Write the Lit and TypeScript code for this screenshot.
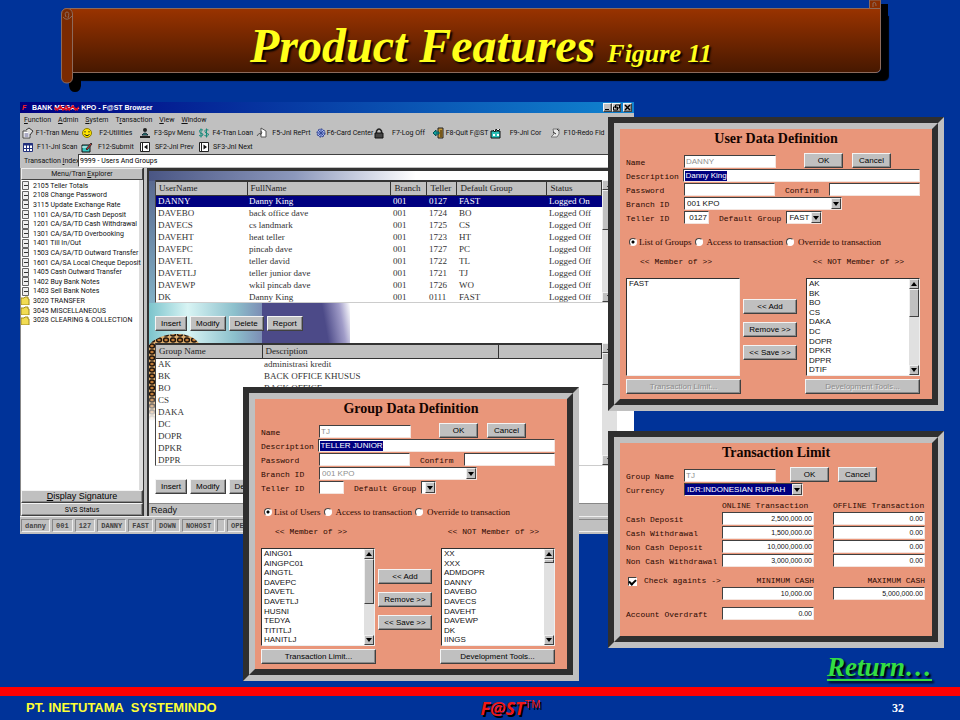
import { LitElement, html, svg, css, nothing } from "lit";
import { customElement, property } from "lit/decorators.js";

const controls = css`
  * { box-sizing: border-box; }
  button {
    font: 8px/11px "Liberation Sans", Arial, sans-serif;
    color: #000;
    background: #c0c0c0;
    border: 1px solid;
    border-color: #f4f4f4 #404040 #404040 #f4f4f4;
    box-shadow: inset -1px -1px 0 #8a8a8a;
    padding: 0;
    height: 15px;
    white-space: nowrap;
  }
  button:disabled { color: #8c8c8c; text-shadow: 1px 1px 0 #eee; }
  .scroll {
    flex: none;
    width: 10px;
    background: #e0e0e0;
    display: flex;
    flex-direction: column;
  }
  .arrow, .thumb {
    background: #c0c0c0;
    border: 1px solid;
    border-color: #f0f0f0 #404040 #404040 #f0f0f0;
  }
  .arrow { height: 10px; display: grid; place-items: center; }
  .arrow.down { margin-top: auto; }
  .arrow svg { width: 6px; height: 4px; display: block; }
`;

const formStyles = css`
  :host { display: block; }
  .frame {
    border: 6px solid;
    border-color: #2f2f2f #c0c0c0 #c0c0c0 #2f2f2f;
  }
  .face {
    border: 6px solid;
    border-color: #c0c0c0 #2f2f2f #2f2f2f #c0c0c0;
    background: #e9967a;
    padding: 0 12px 5px 6px;
    font: 8px/10px "Liberation Mono", "Courier New", monospace;
    color: #2a0800;
    white-space: nowrap;
  }
  h2 {
    margin: 0 -6px 6px 0;
    text-align: center;
    font: bold 14px/19px "Liberation Serif", "Times New Roman", serif;
    color: #140400;
  }
  .row { display: flex; align-items: flex-end; height: 14px; }
  .row > label:first-child { width: 58px; }
  .field {
    display: flex;
    align-items: center;
    height: 13px;
    background: #fff;
    border: 1px solid;
    border-color: #404040 #f4e4de #f4e4de #404040;
    padding: 0 1px;
    overflow: hidden;
  }
  .field input, .field select {
    font: 8px/10px "Liberation Sans", Arial, sans-serif;
    border: 0;
    padding: 0;
    margin: 0;
    background: transparent;
    color: #111;
    width: 100%;
    min-width: 0;
    height: 10px;
    outline: 0;
    appearance: none;
    border-radius: 0;
  }
  .field input:disabled, .field select:disabled { color: #909090; opacity: 1; }
  .field .chosen { background: #000080; color: #fff; width: auto; field-sizing: content; }
  .med { width: 92px; }
  .long { width: 239px; }
  .combo { width: 158px; }
  .tiny { width: 25px; }
  .drop { padding: 0; }
  .drop select { padding-left: 2px; }
  .drop .arrow { flex: none; width: 10px; height: 11px; }
  .ok { width: 39px; margin-left: 28px; }
  .cancel { width: 39px; margin-left: 9px; }
`;

const tri = (up: boolean) => html`<svg viewBox="0 0 6 4" aria-hidden="true">
  ${up ? svg`<path d="M3 0L6 4H0Z" fill="#000"/>` : svg`<path d="M0 0H6L3 4Z" fill="#000"/>`}
</svg>`;

const scrollbar = (thumb: number) => html`<div class="scroll">
  <span class="arrow">${tri(true)}</span>
  <span class="thumb" style="height:${thumb}px"></span>
  <span class="arrow down">${tri(false)}</span>
</div>`;

@customElement("member-dialog")
class MemberDialog extends LitElement {
  @property() heading = "";
  @property() name = "";
  @property() description = "";
  @property() teller = "";
  @property() group = "";
  @property() subject = "";
  @property({ type: Boolean }) editable = false;
  @property({ attribute: false }) members: string[] = [];
  @property({ attribute: false }) others: string[] = [];
  @property({ type: Number }) memberThumb = 0;
  @property({ type: Number }) otherThumb = 4;

  static styles = [controls, formStyles, css`
    .confirm { margin-left: 10px; width: 44px; }
    .group-label { margin: 0 5px 0 10px; }
    .mini { width: 15px; }
    .named { width: 36px; }
    .radios {
      display: flex;
      align-items: center;
      height: 14px;
      margin-top: 11px;
      font: 9px/12px "Liberation Serif", "Times New Roman", serif;
    }
    .radios label { display: flex; align-items: center; margin-left: 3px; }
    .radios label + label { gap: 2px; }
    input[type="radio"] {
      appearance: none;
      width: 8px;
      height: 8px;
      margin: 0 2px 0 0;
      border-radius: 50%;
      border: 1px solid;
      border-color: #444 #fff #fff #444;
      background: #fff;
    }
    input[type="radio"]:checked { background: radial-gradient(#000 0 1px, #fff 2px); }
    .captions {
      display: flex;
      justify-content: space-between;
      padding: 0 16px 0 14px;
      margin: 8px 0 11px;
    }
    .lists { display: flex; height: 98px; }
    .list {
      width: 114px;
      display: flex;
      background: #fff;
      border: 1px solid;
      border-color: #303030 #eee #eee #303030;
    }
    ul {
      flex: 1;
      margin: 0;
      padding: 0 0 0 2px;
      list-style: none;
      display: grid;
      grid-template-rows: repeat(10, 1fr);
      font: 8px/9px "Liberation Sans", Arial, sans-serif;
      color: #111;
    }
    .moves {
      flex: 1;
      display: flex;
      flex-direction: column;
      gap: 8px;
      padding: 21px 9px 0 3px;
    }
    .bottom { display: flex; justify-content: space-between; margin-top: 3px; }
    .bottom button { width: 115px; }
  `];

  render() {
    return html`<section class="frame"><form class="face">
      <h2>${this.heading}</h2>
      <div class="row">
        <label for="name">Name</label>
        <span class="field med"><input id="name" disabled .value=${this.name}></span>
        <button type="button" class="ok">OK</button>
        <button type="button" class="cancel">Cancel</button>
      </div>
      <div class="row">
        <label for="desc">Description</label>
        <span class="field long"><input id="desc" class="chosen" value=${this.description}></span>
      </div>
      <div class="row">
        <label for="pw">Password</label>
        <span class="field med"><input id="pw" type="password"></span>
        <label for="pw2" class="confirm">Confirm</label>
        <span class="field med"><input id="pw2" type="password"></span>
      </div>
      <div class="row">
        <label for="branch">Branch ID</label>
        <span class="field combo drop">
          <select id="branch" ?disabled=${!this.editable}><option>001 KPO</option></select>
          <span class="arrow">${tri(false)}</span>
        </span>
      </div>
      <div class="row">
        <label for="teller">Teller ID</label>
        <span class="field tiny"><input id="teller" style="text-align:right" .value=${this.teller}></span>
        <label for="group" class="group-label">Default Group</label>
        <span class="field drop ${this.group ? "named" : "mini"}">
          <select id="group" ?disabled=${!this.editable}><option>${this.group}</option></select>
          <span class="arrow">${tri(false)}</span>
        </span>
      </div>
      <div class="radios">
        <label><input type="radio" name="view" checked>${this.subject}</label>
        <label><input type="radio" name="view">Access to transaction</label>
        <label><input type="radio" name="view">Override to transaction</label>
      </div>
      <div class="captions"><span>&lt;&lt; Member of &gt;&gt;</span><span>&lt;&lt; NOT Member of &gt;&gt;</span></div>
      <div class="lists">
        <div class="list">
          <ul>${this.members.map((m) => html`<li>${m}</li>`)}</ul>
          ${this.memberThumb ? scrollbar(this.memberThumb) : nothing}
        </div>
        <div class="moves">
          <button type="button">&lt;&lt; Add</button>
          <button type="button">Remove &gt;&gt;</button>
          <button type="button">&lt;&lt; Save &gt;&gt;</button>
        </div>
        <div class="list">
          <ul>${this.others.map((m) => html`<li>${m}</li>`)}</ul>
          ${scrollbar(this.otherThumb)}
        </div>
      </div>
      <div class="bottom">
        <button type="button" ?disabled=${this.editable}>Transaction Limit...</button>
        <button type="button" ?disabled=${this.editable}>Development Tools...</button>
      </div>
    </form></section>`;
  }
}

@customElement("limit-dialog")
class LimitDialog extends LitElement {
  static styles = [controls, formStyles, css`
    .face { padding-bottom: 16px; }
    .ok { margin-left: 14px; }
    .currency { width: 119px; }
    .currency select { background: #000080; color: #fff; height: 11px; }
    .limits {
      display: grid;
      grid-template-columns: 96px 92px 92px;
      justify-content: start;
      align-items: end;
      grid-auto-rows: 14px;
      margin-top: 1px;
    }
    .limits > :nth-child(3n) { margin-left: 19px; margin-right: -19px; }
    .limits input { text-align: right; font-size: 7px; }
    .limits.floor, .limits.over { margin-top: 6px; }
    .limits.floor { margin-top: 5px; }
    .right { text-align: right; }
    .check { display: flex; align-items: center; gap: 7px; padding-left: 2px; }
    .check input {
      appearance: none;
      display: grid;
      place-items: center;
      width: 9px;
      height: 9px;
      margin: 0;
      border: 1px solid;
      border-color: #404040 #fff #fff #404040;
      background: #fff;
    }
    .check input:checked::after {
      content: "";
      width: 5px;
      height: 3px;
      border: solid #000;
      border-width: 0 0 2px 2px;
      rotate: -45deg;
    }
  `];

  render() {
    const rows = [
      ["Cash Deposit", "2,500,000.00"],
      ["Cash Withdrawal", "1,500,000.00"],
      ["Non Cash Deposit", "10,000,000.00"],
      ["Non Cash Withdrawal", "3,000,000.00"],
    ];
    return html`<section class="frame"><form class="face">
      <h2>Transaction Limit</h2>
      <div class="row">
        <label for="gname">Group Name</label>
        <span class="field med"><input id="gname" disabled value="TJ"></span>
        <button type="button" class="ok">OK</button>
        <button type="button" class="cancel">Cancel</button>
      </div>
      <div class="row">
        <label for="cur">Currency</label>
        <span class="field currency drop">
          <select id="cur"><option>IDR:INDONESIAN RUPIAH</option></select>
          <span class="arrow">${tri(false)}</span>
        </span>
      </div>
      <div class="limits">
        <span></span><span>ONLINE Transaction</span><span>OFFLINE Transaction</span>
        ${rows.map(([label, value], i) => html`
          <label for="on${i}">${label}</label>
          <span class="field"><input id="on${i}" value=${value}></span>
          <span class="field"><input aria-label="${label} offline" value="0.00"></span>`)}
      </div>
      <div class="limits floor">
        <label class="check"><input type="checkbox" checked>Check againts -&gt;</label>
        <span class="right">MINIMUM CASH</span><span class="right">MAXIMUM CASH</span>
        <span></span>
        <span class="field"><input aria-label="Minimum cash" value="10,000.00"></span>
        <span class="field"><input aria-label="Maximum cash" value="5,000,000.00"></span>
      </div>
      <div class="limits over">
        <label for="over">Account Overdraft</label>
        <span class="field"><input id="over" value="0.00"></span>
      </div>
    </form></section>`;
  }
}

const icons: Record<string, unknown> = {
  menu: svg`<path d="M1 4h7v7H1z" fill="#fff" stroke="#444"/><path d="M2.500 7h4M2.500 9h4" stroke="#558"/><path d="M4 3l3-2 4 3-3 4" fill="#ddd" stroke="#333"/>`,
  smile: svg`<circle cx="6" cy="6" r="4.500" fill="#ffe600" stroke="#8a7a00"/><path d="M4 4v1.500M8 4v1.500M3.500 7.500q2.500 2.500 5 0" stroke="#222" fill="none"/>`,
  person: svg`<circle cx="6" cy="3" r="2" fill="#222"/><path d="M3 8q3-4 6 0z" fill="#2c9c8c" stroke="#123"/><path d="M1 10h10" stroke="#222" stroke-width="2"/>`,
  money: svg`<path d="M5 3Q1 2 1.500 4.500T5 7Q5 10 1 8.500M3 1.500v9M10.500 3Q6.500 2 7 4.500T10.500 7Q10.500 10 6.500 8.500M8.500 1.500v9" stroke="#178a7a" fill="none"/>`,
  page: svg`<path d="M5 1l5 3v6H5z" fill="#fff" stroke="#555"/><path d="M1 9q1-3 5-3l-1-2M6 6l-2 2" stroke="#555" fill="none"/>`,
  globe: svg`<circle cx="6" cy="6" r="4" fill="#a9b6ec" stroke="#23337a" stroke-dasharray="2 1"/><path d="M6 2v8M2 6h8M3 3l6 6M9 3L3 9" stroke="#344a9a"/>`,
  lock: svg`<path d="M3.500 6V4q2.500-4 5 0v2" stroke="#222" stroke-width="1.500" fill="none"/><path d="M2 6h8v5H2z" fill="#444" stroke="#111"/>`,
  exit: svg`<path d="M6 1h5v10H6z" fill="#c79a3b" stroke="#222"/><path d="M8 3h2v7H8z" fill="#7a5a1a"/><path d="M1 6l3-3v2h3v2H4v2z" fill="#14a0a0" stroke="#055"/>`,
  form: svg`<path d="M1 4h9v7H1z" fill="#2cc0b8" stroke="#111"/><path d="M3 3l2 2 1-3 2 2 2-2" stroke="#111" fill="#fff"/><path d="M3 7h2v2H3zM7 7h2v2H7z" fill="#fff"/>`,
  redo: svg`<path d="M4 2h6v5l-2 3H2l3-3z" fill="#e8e8e8" stroke="#777"/><path d="M4 5l3 2M8 2l2 2" stroke="#333"/>`,
  grid: svg`<path d="M1.500 2.500h9v8h-9z" fill="#fff" stroke="#22307c"/><path d="M1 3.500h10" stroke="#22307c" stroke-width="2"/><path d="M4.500 4v6M7.500 4v6M2 7.500h9" stroke="#22307c"/>`,
  submit: svg`<path d="M1 4h8v7H1z" fill="#38c4be" stroke="#111"/><path d="M1 6h7" stroke="#fff"/><path d="M5 8l5-6 1 1-5 6z" fill="#e33" stroke="#333"/>`,
  prev: svg`<path d="M1.500 1.500h9v9h-9z" fill="#fff" stroke="#222"/><path d="M3.500 2v8" stroke="#222"/><path d="M8.500 3.500v5L5 6z" fill="#111"/>`,
  next: svg`<path d="M1.500 1.500h9v9h-9z" fill="#fff" stroke="#222"/><path d="M3.500 2v8" stroke="#222"/><path d="M5.500 3.500v5L9 6z" fill="#111"/>`,
};

const icon = (name: string) => html`<svg class="icon" viewBox="0 0 12 12" aria-hidden="true">${icons[name]}</svg>`;

@customElement("browser-window")
class BrowserWindow extends LitElement {
  static styles = [controls, css`
    :host {
      display: block;
      background: #c0c0c0;
      font: 7px/10px Roboto, "Liberation Sans", sans-serif;
      color: #111;
      white-space: nowrap;
    }
    .title {
      display: flex;
      align-items: center;
      height: 11px;
      padding: 0 2px;
      background: linear-gradient(90deg, #000080, #1084d0);
      color: #fff;
      font: bold 7px/10px "Liberation Sans", sans-serif;
    }
    .logo { color: #f22; width: 10px; font-style: italic; }
    .struck { position: relative; }
    .struck svg { position: absolute; left: 0; top: 1px; width: 100%; height: 8px; }
    .sys { display: flex; margin-left: auto; }
    .sys button { width: 9px; height: 9px; display: grid; place-items: center; }
    .sys button:last-child { margin-left: 2px; }
    .sys svg { width: 7px; height: 7px; }
    nav { display: flex; gap: 7px; padding: 1px 4px; height: 13px; align-items: center; }
    nav a { color: inherit; text-decoration: none; }
    .tools {
      display: grid;
      grid-template-columns: repeat(10, 1fr);
      grid-auto-rows: 14px;
      padding: 0 27px 0 2px;
    }
    .tools button {
      all: unset;
      display: flex;
      align-items: center;
      color: #111;
      min-width: 0;
    }
    .tools span { flex: 1; text-align: center; }
    .icon { width: 12px; height: 12px; flex: none; }
    .index { display: flex; align-items: center; height: 13px; padding-left: 4px; }
    .index label { width: 54px; }
    .index input {
      flex: 1;
      height: 13px;
      border: 1px solid;
      border-color: #404040 #fff #fff #404040;
      padding: 0 1px;
      font: inherit;
      outline: 0;
    }
    .body { display: grid; grid-template-columns: 124px 1fr; column-gap: 3px; margin-top: 1px; height: 348px; }
    aside { display: flex; flex-direction: column; border-right: 1px solid #333; border-left: 1px solid #888; }
    aside h3 {
      margin: 0;
      font: inherit;
      text-align: center;
      border: 1px solid;
      border-color: #eee #444 #444 #eee;
    }
    .tree { flex: 1; background: #fff; border-right: 4px solid #ddd; }
    .tree ul { margin: 0; padding: 1px 0 0; list-style: none; height: 145px; display: grid; grid-template-rows: repeat(15, 1fr); }
    .tree li { display: flex; gap: 3px; align-items: center; min-height: 0; }
    .tree svg { width: 9px; height: 9px; flex: none; }
    aside button { height: 13px; width: 100%; font-size: 9px; }
    aside .svs { font: 7px/10px Roboto, sans-serif; }
    .work {
      position: relative;
      border-top: 3px solid #333;
      border-left: 2px solid #333;
      display: flex;
      flex-direction: column;
      background:
        linear-gradient(90deg, #4a5684, #8c98bc 30%, #fff 55%) 0 0 / 100% 10px no-repeat,
        linear-gradient(80deg, #4c4a88 70%, #a09cc8 88%, #fff) 113px 132px / 88px 41px no-repeat,
        linear-gradient(90deg, #7cc4cc, #d8f4f4 34%, #8cc0cc 75%, #7c8cb4) 0 132px / 114px 41px no-repeat,
        linear-gradient(#56648c, #8fc6d6) 0 0 / 6px 170px no-repeat,
        #fff;
    }
    .art { position: absolute; left: 0; top: 160px; width: 60px; height: 90px; }
    .grid { position: relative; display: flex; margin: 9px 17px 0 6px; height: 123px; background: #fff; border-bottom: 1px solid #ccc; border-left: 1px solid #444; }
    .grid .scroll { width: 15px; }
    table { width: 100%; table-layout: fixed; border-collapse: collapse; height: 122px; font: 9px/11px "Liberation Serif", "Times New Roman", serif; color: #333; }
    th, td { padding: 0 2px; text-align: left; font-weight: normal; height: 12px; overflow: hidden; }
    th { height: 14px; background: #c0c0c0; border: 1px solid #333; border-top-width: 2px; border-left-width: 0; color: #222; padding-left: 3px; }
    .picked td { background: #000080; color: #fff; }
    .actions { position: relative; display: flex; gap: 3px; padding: 13px 0 3px 6px; }
    .actions button { min-width: 28px; padding: 0 5px; }
    .ready { margin-top: auto; height: 13px; background: #c0c0c0; border-top: 1px solid #888; padding: 0 2px; font: 9px/12px "Liberation Sans", sans-serif; }
    footer { display: flex; gap: 2px; padding: 2px 0 2px 1px; height: 18px; border-top: 1px solid #eee; font: bold 7px/12px "Liberation Mono", monospace; color: #444; }
    footer span { border: 1px solid; border-color: #888 #eee #eee #888; padding: 0 3px; min-width: 8px; text-align: center; }
    footer span:last-child { flex: 1; text-align: left; }
  `];

  render() {
    const tools = [
      ["menu", "F1-Tran Menu"], ["smile", "F2-Utilities"], ["person", "F3-Spv Menu"], ["money", "F4-Tran Loan"],
      ["page", "F5-Jnl RePrt"], ["globe", "F6-Card Center"], ["lock", "F7-Log Off"], ["exit", "F8-Quit F@ST"],
      ["form", "F9-Jnl Cor"], ["redo", "F10-Redo Fld"],
      ["grid", "F11-Jnl Scan"], ["submit", "F12-Submit"], ["prev", "SF2-Jnl Prev"], ["next", "SF3-Jnl Next"],
    ];
    const tree = [
      "2105 Teller Totals", "2108 Change Password", "3115 Update Exchange Rate", "1101 CA/SA/TD Cash Deposit",
      "1201 CA/SA/TD Cash Withdrawal", "1301 CA/SA/TD Overbooking", "1401 Till In/Out",
      "1503 CA/SA/TD Outward Transfer", "1601 CA/SA Local Cheque Deposit", "1405 Cash Outward Transfer",
      "1402 Buy Bank Notes", "1403 Sell Bank Notes", "3020 TRANSFER", "3045 MISCELLANEOUS", "3028 CLEARING & COLLECTION",
    ];
    const users = [
      ["DANNY", "Danny King", "001", "0127", "FAST", "Logged On"],
      ["DAVEBO", "back office dave", "001", "1724", "BO", "Logged Off"],
      ["DAVECS", "cs landmark", "001", "1725", "CS", "Logged Off"],
      ["DAVEHT", "heat teller", "001", "1723", "HT", "Logged Off"],
      ["DAVEPC", "pincab dave", "001", "1727", "PC", "Logged Off"],
      ["DAVETL", "teller david", "001", "1722", "TL", "Logged Off"],
      ["DAVETLJ", "teller junior dave", "001", "1721", "TJ", "Logged Off"],
      ["DAVEWP", "wkil pincab dave", "001", "1726", "WO", "Logged Off"],
      ["DK", "Danny King", "001", "0111", "FAST", "Logged Off"],
    ];
    const groups = [
      ["AK", "administrasi kredit"], ["BK", "BACK OFFICE KHUSUS"], ["BO", "BACK OFFICE"], ["CS", ""],
      ["DAKA", ""], ["DC", ""], ["DOPR", ""], ["DPKR", ""], ["DPPR", ""],
    ];
    const menus = [["", "F", "unction"], ["", "A", "dmin"], ["", "S", "ystem"], ["T", "r", "ansaction"], ["", "V", "iew"], ["", "W", "indow"]];
    const actions = (names: string[]) => html`<div class="actions">
      ${names.map((a) => html`<button type="button">${a}</button>`)}
    </div>`;
    return html`
      <div class="title">
        <span class="logo">F</span><span>BANK&nbsp;</span>
        <span class="struck">MEGA -<svg viewBox="0 0 28 8" preserveAspectRatio="none" aria-hidden="true">
          <path d="M0 3l4 3 3-4 3 4 4-4 3 4 4-4 3 4 4-3M1 6l6-2 7 2 7-3 6 3" stroke="#e01020" stroke-width="1.500" fill="none"/></svg></span>
        <span>&nbsp;KPO - F@ST Browser</span>
        <div class="sys">
          <button aria-label="Minimize"><svg viewBox="0 0 7 7"><path d="M1 5h4v1H1z"/></svg></button>
          <button aria-label="Restore"><svg viewBox="0 0 7 7"><path d="M2.500 1h4v3h-4zM.5 3h4v3h-4z" fill="#ccc" stroke="#000"/></svg></button>
          <button aria-label="Close"><svg viewBox="0 0 7 7"><path d="M1 1l5 5M6 1L1 6" stroke="#000" stroke-width="1.500"/></svg></button>
        </div>
      </div>
      <nav>${menus.map(([a, b, c]) => html`<a href="#">${a}<u>${b}</u>${c}</a>`)}</nav>
      <div class="tools">${tools.map(([i, t]) => html`<button type="button">${icon(i)}<span>${t}</span></button>`)}</div>
      <div class="index"><label for="idx">Transaction <u>I</u>ndex</label><input id="idx" value="9999 - Users And Groups"></div>
      <div class="body">
        <aside>
          <h3>Menu/Tran <u>E</u>xplorer</h3>
          <div class="tree"><ul>${tree.map((t, i) => html`<li>
            <svg viewBox="0 0 9 9" aria-hidden="true">${i < 12
              ? svg`<path d="M1.500 .5h6v8h-6z" fill="#eee" stroke="#666"/><path d="M3 4.500h4" stroke="#333"/>`
              : svg`<path d="M0 2h3l1-1h3v2h1v6H0z" fill="#f2dc52" stroke="#a08a20"/>`}</svg>${t}</li>`)}</ul></div>
          <button type="button"><u>D</u>isplay Signature</button>
          <button type="button" class="svs">SVS Status</button>
        </aside>
        <div class="work">
          <svg class="art" viewBox="0 0 60 90" aria-hidden="true">
            <defs>
              <pattern id="spots" width="7" height="6" patternUnits="userSpaceOnUse">
                <rect width="7" height="6" fill="#e0b070"/><ellipse cx="3" cy="3" rx="2.500" ry="2" fill="#c07c38" stroke="#20140c" stroke-width="1.500"/>
              </pattern>
              <linearGradient id="fade" x2="0" y2="1"><stop offset=".7" stop-color="#fff" stop-opacity="0"/><stop offset="1" stop-color="#fff"/></linearGradient>
            </defs>
            <path d="M0 14Q8 4 26 3t26 12V20H6V90H0z" fill="url(#spots)"/>
            <path d="M0 0h8v90H0z" fill="url(#fade)"/>
          </svg>
          <div class="grid">
            <table>
              <colgroup><col style="width:91px"><col><col style="width:36px"><col style="width:30px"><col style="width:90px"><col style="width:55px"></colgroup>
              <thead><tr>${["UserName", "FullName", "Branch", "Teller", "Default Group", "Status"].map((h) => html`<th>${h}</th>`)}</tr></thead>
              <tbody>${users.map((u, i) => html`<tr class=${i ? "" : "picked"}>${u.map((c) => html`<td>${c}</td>`)}</tr>`)}</tbody>
            </table>
            ${scrollbar(40)}
          </div>
          ${actions(["Insert", "Modify", "Delete", "Report"])}
          <div class="grid">
            <table>
              <colgroup><col style="width:106px"><col><col style="width:103px"></colgroup>
              <thead><tr><th>Group Name</th><th>Description</th><th></th></tr></thead>
              <tbody>${groups.map((g) => html`<tr><td>${g[0]}</td><td>${g[1]}</td><td></td></tr>`)}</tbody>
            </table>
            ${scrollbar(32)}
          </div>
          ${actions(["Insert", "Modify", "Delete"])}
          <div class="ready">Ready</div>
        </div>
      </div>
      <footer>${["danny", "001", "127", "DANNY", "FAST", "DOWN", "NOHOST", "", "OPENED"].map((s) => html`<span>${s}</span>`)}</footer>
    `;
  }
}

@customElement("app-root")
class AppRoot extends LitElement {
  static styles = css`
    * { box-sizing: border-box; }
    :host {
      display: flex;
      flex-direction: column;
      min-height: 100vh;
      background: #003399;
      overflow: hidden;
    }
    header { position: relative; height: 88px; padding: 8px 79px 0 61px; }
    .band {
      height: 65px;
      background: linear-gradient(#993300, #471800);
      border: 1px solid #8c6a5c;
      border-radius: 6px 0 5px 0;
      box-shadow: 8px 8px 1px #000;
      display: flex;
      justify-content: center;
      align-items: baseline;
      color: #ffff1a;
      text-shadow: 2px 2px 2px #000;
      font-family: "Liberation Serif", "Times New Roman", serif;
      font-style: italic;
      padding-left: 20px;
    }
    h1 { margin: 0 12px 0 0; font-size: 48px; line-height: 74px; }
    .figure { font-size: 26px; font-weight: bold; }
    .roll { position: absolute; overflow: visible; }
    .roll.left { left: 61px; top: 8px; width: 12px; height: 84px; }
    .roll.right { right: 79px; top: 0; width: 12px; height: 9px; }
    main {
      position: relative;
      flex: 1;
      min-height: 599px;
      display: flex;
      align-items: flex-end;
      justify-content: flex-end;
      padding: 0 28px 4px;
    }
    browser-window { position: absolute; left: 20px; top: 14px; width: 64%; }
    member-dialog, limit-dialog { position: absolute; width: 35%; }
    .group { left: 243px; top: 299px; }
    .user { right: 16px; top: 29px; }
    limit-dialog { right: 16px; top: 343px; }
    .return {
      color: #33dd44;
      font: italic bold 27px/32px "Liberation Serif", "Times New Roman", serif;
      text-shadow: 2px 2px 2px #000;
      text-underline-offset: 3px;
    }
    footer {
      display: grid;
      grid-template-columns: 5fr auto 4fr;
      align-items: center;
      height: 33px;
      padding: 0 56px 0 26px;
      border-top: 9px solid #f00;
      font: bold 13px/22px "Liberation Sans", Arial, sans-serif;
      color: #ffff33;
      white-space: pre;
    }
    footer span { min-width: 0; }
    .brand { color: #f01818; font: italic bold 18px/22px "Open Sans", sans-serif; text-shadow: 2px 2px 0 #000; }
    .brand sup { font: 11px/8px "Liberation Sans", sans-serif; }
    .page { text-align: right; color: #fff; font: bold 12px/22px "Liberation Serif", serif; }
  `;

  render() {
    return html`
      <header>
        <div class="band"><h1>Product Features</h1><span class="figure">Figure 11</span></div>
        <svg class="roll left" viewBox="0 0 12 84" aria-hidden="true">
          <path d="M8 72h12v6q-1 6-6 6t-6-6z" fill="#000"/>
          <path d="M.5 6Q1 .5 6 .5T11.500 6V70Q11 75 6 75T.5 70z" fill="#7a2a02" stroke="#8c6a5c"/>
          <path d="M11 8Q6 14 2 9M5 9Q3 4 6 4t1 6" fill="none" stroke="#8c6a5c"/>
        </svg>
        <svg class="roll right" viewBox="0 0 12 9" aria-hidden="true">
          <path d="M12 4h7v16h-7z" fill="#000"/>
          <path d="M.5 0V8.500H11.500V0z" fill="#8a2e00" stroke="#8c6a5c"/>
          <path d="M4 7V3q3-2 3 3" fill="none" stroke="#8c6a5c"/>
        </svg>
      </header>
      <main>
        <browser-window></browser-window>
        <member-dialog class="user" heading="User Data Definition" name="DANNY" description="Danny King"
          teller="0127" group="FAST" subject="List of Groups" editable
          .members=${["FAST"]} .otherThumb=${28}
          .others=${["AK", "BK", "BO", "CS", "DAKA", "DC", "DOPR", "DPKR", "DPPR", "DTIF"]}></member-dialog>
        <limit-dialog></limit-dialog>
        <member-dialog class="group" heading="Group Data Definition" name="TJ" description="TELLER JUNIOR"
          subject="List of Users" .memberThumb=${45} .otherThumb=${4}
          .members=${["AING01", "AINGPC01", "AINGTL", "DAVEPC", "DAVETL", "DAVETLJ", "HUSNI", "TEDYA", "TITITLJ", "HANITLJ"]}
          .others=${["XX", "XXX", "ADMDOPR", "DANNY", "DAVEBO", "DAVECS", "DAVEHT", "DAVEWP", "DK", "IINGS"]}></member-dialog>
        <a class="return" href="#">Return…</a>
      </main>
      <footer><span>PT. INETUTAMA  SYSTEMINDO</span><span class="brand">F@ST<sup>TM</sup></span><span class="page">32</span></footer>
    `;
  }
}
